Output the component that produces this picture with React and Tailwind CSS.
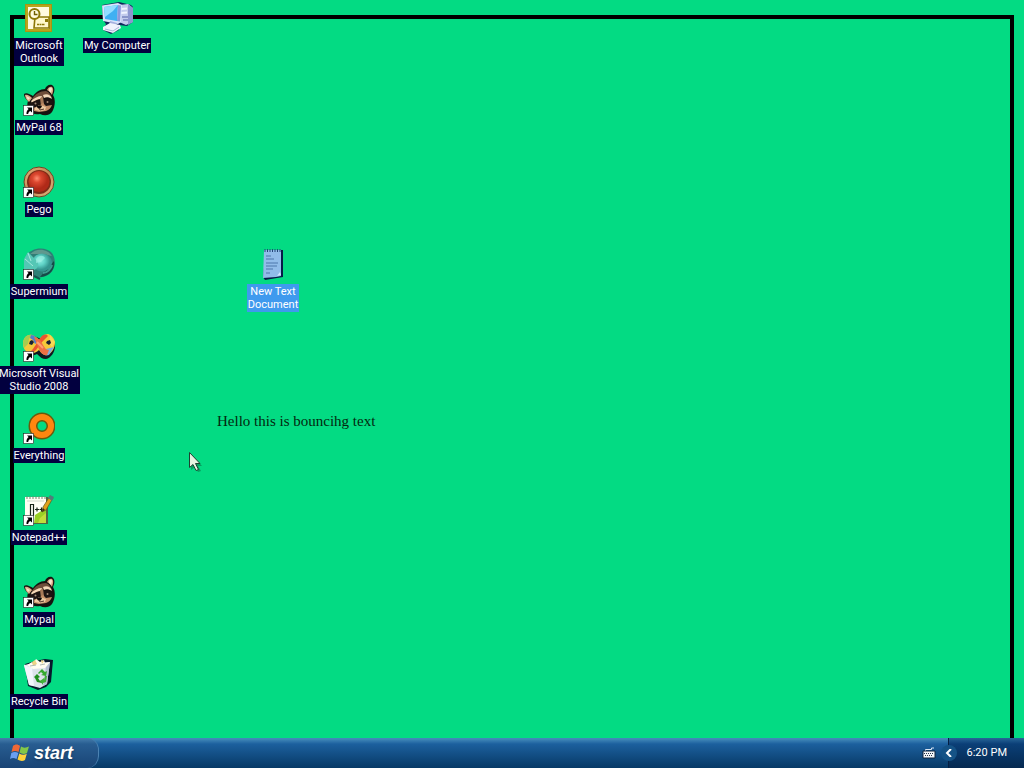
import React, { useState } from "react";

const ShortcutArrow = () => (
  <g>
    <rect x="0.5" y="21.5" width="10" height="10" fill="#fff" stroke="#222" strokeWidth="0.6" />
    <path d="M4 23.500h5v5l-1.700-1.600C6 27.500 5.200 28.800 5.200 30H3.500C3.300 28 4 26.400 5.600 25.100z" fill="#000" />
  </g>
);

const OutlookIcon = () => (
  <svg viewBox="0 0 32 32" className="size-8">
    <rect x="2" y="2" width="27" height="28" fill="#a89410" />
    <rect x="3" y="3" width="25" height="26" fill="#b9a41c" />
    <rect x="5" y="5" width="21" height="22" fill="#fffbe0" />
    <path d="M12 15h14v11H11z" fill="#fff8cc" stroke="#8c7808" strokeWidth="1.600" />
    <path d="M22 17h3v3h-3z" fill="#8c7808" />
    <path d="M14 22.500h8" stroke="#8c7808" strokeWidth="1.500" strokeDasharray="2 0.500" />
    <circle cx="11.500" cy="12" r="5" fill="#fffbe0" stroke="#8c7808" strokeWidth="2" />
    <path d="M11.500 9v3.500h3" fill="none" stroke="#6f5e00" strokeWidth="1.400" />
  </svg>
);

const ComputerIcon = () => (
  <svg viewBox="0 0 32 32" className="size-8">
    <path d="M2 28l3-6-3-4L1 3l17-3 12 3 3 3-1 14-6 4-8-1v5l-8 4z" fill="#11265c" />
    <path d="M18 3l9-1 5 4v14l-7 3-7-3z" fill="#c3cbec" />
    <path d="M27 2l5 4v14l-5 3z" fill="#8c97cf" />
    <path d="M20 6l6-.5v2L20 8zM20 10l6-.5v2l-6 .5z" fill="#f0f4ff" />
    <path d="M22 18h5M21 15h6" stroke="#5362a8" />
    <path d="M1 3.500L17 1l4 2-1 17-3 2-15-3z" fill="#dbe3fb" />
    <path d="M3 5l14-2-1 16-12-2z" fill="#3fb0f2" />
    <path d="M3 5l14-2-5 6-8 6z" fill="#92deff" />
    <path d="M17 3l3 .5-1 16-3-.5z" fill="#8c9adb" />
    <path d="M9 19l7 2-1 4-7-1z" fill="#a5b0de" />
    <path d="M2 25l7-4 10 2 1 3-8 5-10-3z" fill="#f0f2fc" />
    <path d="M4 27l8 2 6-4" fill="none" stroke="#a9b2da" />
  </svg>
);

const RaccoonIcon = () => (
  <svg viewBox="0 0 32 32" className="size-8">
    <path d="M1 10c2-2 6 0 9 2 3-4 7-7 12-7 1-3 4-5 7-4 3 2 3 6 1 10 3 5 2 12-1 17-3 4-8 4-12 2-4 1-9 0-11-4-2-3-2-6-1-9-3-2-4-5-4-7z" fill="#17120f" />
    <path d="M2 11c2-1 5 1 7 3l-3 4c-2-2-4-4-4-7z" fill="#e0ae88" />
    <path d="M3 12l4 2-2 2z" fill="#fbe5d0" />
    <path d="M24 6c1-3 4-4 5-3 2 2 1 5 0 8l-2-3z" fill="#d9a882" />
    <path d="M26 5c1-2 3-1 3 0l-1 4-2-2z" fill="#fae4cf" />
    <path d="M9 15c3-5 8-8 14-8 3 1 5 4 6 7-4-2-7-2-10 0l-5 2-5 3z" fill="#6f4e3a" />
    <path d="M8 17c3-3 7-5 11-5l-1 3c-4 0-7 2-9 4zM20 11c4-2 8 0 9 4-3-2-6-2-8-1z" fill="#f3d8b8" />
    <path d="M7 20c3-3 7-4 11-4 4-2 9-2 12 2l-2 5-7-1-4 3-7-1z" fill="#1d1412" />
    <path d="M17 14l3-1 1 7-3 2z" fill="#a77a58" />
    <path d="M10 24l6-2 4-3 3 3 6-1c-1 3-3 5-6 6l-7 1-5-1z" fill="#c28f67" />
    <path d="M12 24l4-3 4 1 3 1-1 3-4 1-6-1z" fill="#eccaa1" />
    <path d="M14 22c2-1 4-1 5 0l-1 2c-1 1-3 1-4-1z" fill="#0d0908" />
    <path d="M16 24l1 2 4-1" fill="none" stroke="#50352a" />
    <circle cx="12.500" cy="19.500" r="1" fill="#a38c79" />
    <circle cx="24.500" cy="18" r="1" fill="#a38c79" />
    <ShortcutArrow />
  </svg>
);

const PegoIcon = () => (
  <svg viewBox="0 0 32 32" className="size-8">
    <defs>
      <radialGradient id="pegoRed" cx=".4" cy=".35">
        <stop stopColor="#ff8d70" />
        <stop offset=".4" stopColor="#dc4830" />
        <stop offset="1" stopColor="#b02a18" />
      </radialGradient>
      <linearGradient id="pegoRim" x1="0" y1="0" x2="1" y2="1">
        <stop stopColor="#e6b27a" />
        <stop offset=".5" stopColor="#c08a56" />
        <stop offset="1" stopColor="#e2b981" />
      </linearGradient>
    </defs>
    <circle cx="16" cy="16" r="15" fill="url(#pegoRim)" stroke="#704524" />
    <circle cx="16" cy="16" r="12" fill="#7e2c18" />
    <circle cx="16" cy="15.500" r="10.500" fill="url(#pegoRed)" />
    <ShortcutArrow />
  </svg>
);

const SupermiumIcon = () => (
  <svg viewBox="0 0 32 32" className="size-8">
    <defs>
      <radialGradient id="smGlobe" cx=".4" cy=".4">
        <stop stopColor="#8eeee2" />
        <stop offset=".5" stopColor="#5fd2c6" />
        <stop offset="1" stopColor="#34958f" />
      </radialGradient>
    </defs>
    <path d="M3 8C8-1 23-2 29 5c5 7 3 18-4 22-7 4-16 3-20-2z" fill="#2e7f76" />
    <path d="M7 6c7-7 18-5 22 2l-9-2z" fill="#60988e" />
    <path d="M31 13c2 9-6 16-14 16l6-7z" fill="#164c48" />
    <path d="M20 25c4 0 8-4 9-8" fill="none" stroke="#3f9b90" strokeWidth="2" />
    <ellipse cx="19" cy="14.500" rx="10" ry="9" fill="url(#smGlobe)" />
    <path d="M1 11l4-7 5 5 3 3c3 3 3 6 0 9l-4 2-4-2-4 1z" fill="#55c7b5" />
    <path d="M5 5l3 8M2 11l8 7" stroke="#a2e9db" />
    <path d="M13 11c3-4 7-4 9-1l-4 4-5 1z" fill="#a5f2e6" opacity=".6" />
    <path d="M11 28l6 3" stroke="#14544f" strokeWidth="2" />
    <ShortcutArrow />
  </svg>
);

const VisualStudioIcon = () => (
  <svg viewBox="0 0 32 32" className="size-8">
    <path d="M2 14c0-6 4-9 9-8l7 3 7-3c4 1 7 5 7 10 0 6-4 12-9 13-4 0-6-2-9-5-3 2-9 2-11-1z" fill="#101820" />
    <path d="M0 14c0-6 4-10 9-9 4 1 5 3 7 5 2-3 5-6 9-6 4 1 7 5 7 9s-3 11-8 12c-4 0-6-2-8-5-3 3-7 4-11 3-3-2-5-5-5-9z" fill="#f4c83b" />
    <path d="M0 14c0-6 4-10 9-9l-3 4-1 5-4 4z" fill="#a7cc4f" />
    <path d="M8 5c4 0 5 3 8 6l-4 3-2-4-3-2z" fill="#537fcc" />
    <path d="M27 5l5 7-3 5-3-4z" fill="#f8d956" />
    <path d="M31 17l-5 8c-3 1-5 0-7-2l4-4z" fill="#7eaadc" />
    <path d="M5 22c3 0 5-3 7-6l6-9c3-3 5-3 7-1l-6 6-6 8c-3 3-5 4-8 2z" fill="#ec5430" />
    <path d="M11 7c4 0 7 4 9 8 2 3 3 5 6 5l-2 5c-5 1-7-4-9-8z" fill="#ee7045" />
    <path d="M14 12l6 6" stroke="#ff9f70" strokeWidth="2" />
    <path d="M7 11l2-1 2 2-2 3-3-1zM24 11l3-1 1 3-2 2-3-2z" fill="#182033" />
    <ShortcutArrow />
  </svg>
);

const EverythingIcon = () => (
  <svg viewBox="0 0 32 32" className="size-8">
    <path d="M11 22l-7 8" stroke="#6e5c0c" strokeWidth="4" />
    <circle cx="19" cy="14" r="9" fill="none" stroke="#6b5a0c" strokeWidth="9" />
    <circle cx="19" cy="14" r="9" fill="none" stroke="#ff8610" strokeWidth="6" />
    <ShortcutArrow />
  </svg>
);

const NotepadPlusIcon = () => (
  <svg viewBox="0 0 32 32" className="size-8">
    <path d="M3 3h22v27H3z" fill="#4f6643" />
    <path d="M2 3h21v26H2z" fill="#fffff4" />
    <path d="M12 21l11-7v15H11z" fill="#99cf25" />
    <path d="M17 24l6-5v10h-8z" fill="#c2dd3c" />
    <path d="M4 2v3M7 2v3M10 2v3M13 2v3M16 2v3M19 2v3M22 2v3" stroke="#7b836e" />
    <path d="M4 7h17" stroke="#d2d9cb" />
    <path d="M7.500 22V10.500h3V22M12 15.500h4M14 13.500v4M16.500 15.500h4M18.500 13.500v4" fill="none" stroke="#172315" strokeWidth="1.200" />
    <path d="M19 18l1-5L27 2l3 2-7 12z" fill="#e0a21c" stroke="#5b5720" strokeWidth=".7" />
    <path d="M25 4l2-3 4 2-2 4z" fill="#517d7b" />
    <path d="M19 18l1-4 2 2z" fill="#392918" />
    <ShortcutArrow />
  </svg>
);

const RecycleBinIcon = () => (
  <svg viewBox="0 0 32 32" className="size-8">
    <path d="M2 6l10-3 10-2 8 1-2 22-5 5-8 3-10-4z" fill="#07182c" />
    <path d="M1 7l11-2 15-1-3 22-7 4-11-3z" fill="#dce2ea" />
    <path d="M1 7l8 3 2 18-5-1z" fill="#f3f5fc" />
    <path d="M23 9l4-5-3 22-4 2z" fill="#b5bfd4" />
    <path d="M4 7l5-3 1 2 3-5 4 3 4-2 1 3 5-1-5 6-12 1z" fill="#fffdf1" />
    <path d="M9 4l3-2 2 4-4 2zM18 2l3 1-2 3z" fill="#eed484" />
    <path d="M7 8l6-1M17 7l5-1" stroke="#b2b9b2" />
    <path d="M15 15l4-4 3 3 2-1-1 5-5-1 2-1-2-2-2 2z" fill="#35a92e" />
    <path d="M14 16l3 3-2 1 2 3 2-1v3l-5-1-2-4-1-1z" fill="#208e1d" />
    <path d="M24 18l-1 6-3 1v2l-3-4 4-3v2l1-4z" fill="#42b13a" />
  </svg>
);

const TextFileIcon = () => (
  <svg viewBox="0 0 32 32" className="size-8">
    <path d="M9 2h17v27L8 32l-2-3z" fill="#061b47" />
    <path d="M7 2h17v26l-5 1-13 1z" fill="#91bce9" />
    <path d="M8 1v3M10.500 1v3M13 1v3M15.500 1v3M18 1v3M20.500 1v3M23 1v3" stroke="#234477" />
    <path d="M9 8h5M9 11h8M9 15h12M9 18h11M9 21h7M9 25h4" stroke="#4c77ab" />
    <path d="M20 28l4-1-1-3z" fill="#d3e6ff" />
  </svg>
);

const WindowsLogo = () => (
  <svg viewBox="0 0 20 20" className="size-5">
    <path d="M3 3c2-2 5-2 7 0L8.500 9C6 7.500 4 7.500 1.500 9z" fill="#ef6835" />
    <path d="M11 3.500c2 1.500 5 1.500 8 0L17 10c-3 1.500-5 1-7.500-.5z" fill="#83c748" />
    <path d="M1.300 10c2.500-1.500 4.500-1.500 7 0L6.500 16C4 14.500 2 14.500 0 16z" fill="#6b9ff0" />
    <path d="M9.300 10.500c2.500 1.500 5 1.500 7.500.3L15 17c-2.500 1.500-5 1-7.500-.5z" fill="#ffd23b" />
  </svg>
);

const KeyboardIcon = () => (
  <svg viewBox="0 0 14 12" className="w-3.5 h-3">
    <path d="M3.500 4V2.500h6V1H12" fill="none" stroke="#d9e5f3" />
    <path d="M1 4h12v7H1z" fill="#f4f6f8" stroke="#10243d" />
    <path d="M2 6.500h10M3 8.500h8" stroke="#28364a" strokeDasharray="1 1" />
  </svg>
);

const icons = [
  { name: "Microsoft\nOutlook", Icon: OutlookIcon },
  { name: "MyPal 68", Icon: RaccoonIcon },
  { name: "Pego", Icon: PegoIcon },
  { name: "Supermium", Icon: SupermiumIcon },
  { name: "Microsoft Visual\nStudio 2008", Icon: VisualStudioIcon },
  { name: "Everything", Icon: EverythingIcon },
  { name: "Notepad++", Icon: NotepadPlusIcon },
  { name: "Mypal", Icon: RaccoonIcon },
  { name: "Recycle Bin", Icon: RecycleBinIcon },
  { name: "My Computer", Icon: ComputerIcon },
];

const textFile = { name: "New Text\nDocument", Icon: TextFileIcon };

const DesktopIcon = ({ name, Icon, selected, onSelect }) => (
  <button onClick={() => onSelect(name)} className="flex w-[78px] flex-col items-center gap-1 pt-0.5 focus:outline-none">
    <Icon />
    <span className={`px-px pt-px pb-px text-center text-[11px] leading-[13px] whitespace-pre text-white ${selected ? "bg-[#3f9aee]" : "bg-[#02003f]"}`}>
      {name}
    </span>
  </button>
);

const App = () => {
  const [selected, setSelected] = useState(textFile.name);

  return (
    <div className="flex h-screen flex-col overflow-hidden bg-[#03db83] font-[Roboto,sans-serif]">
      <main className="relative flex min-h-0 flex-1 px-2.5 pt-[15px]">
        <div className="flex-1 border-4 border-b-0 border-black" />

        <div className="absolute top-0 left-0 grid grid-flow-col grid-rows-[repeat(9,82px)] auto-cols-[78px] items-start">
          {icons.map((item) => (
            <DesktopIcon key={item.name} {...item} selected={selected === item.name} onSelect={setSelected} />
          ))}
        </div>

        <div className="absolute top-[246px] left-[234px]">
          <DesktopIcon {...textFile} selected={selected === textFile.name} onSelect={setSelected} />
        </div>

        <p className="absolute top-[412px] left-[217px] font-['Liberation_Serif',serif] text-[15px] leading-[18px] whitespace-nowrap text-[#04280f]">
          Hello this is bouncihg text
        </p>

        <svg viewBox="0 0 14 22" className="absolute top-[451px] left-[188px] h-[22px] w-3.5">
          <path d="M3 3v16l4-3 3 5 3-1-3-5h4z" fill="#087448" opacity=".6" />
          <path d="M1.500 1.500v15l3.500-3 3 6 2.500-1-3-6h4.500z" fill="#e4f3e0" stroke="#1d4230" />
        </svg>
      </main>

      <footer className="flex h-[30px] shrink-0 items-stretch justify-between bg-linear-to-b from-[#4289b9] from-3% via-[#1c609e] via-20% to-[#073966]">
        <button className="flex w-[99px] items-center gap-1 rounded-r-xl border-r border-[#4b83b3] bg-linear-to-b from-[#477fad] via-[#285d91] via-20% to-[#194475] pl-2.5 font-['Liberation_Sans',sans-serif] text-lg font-bold text-white italic text-shadow-md">
          <WindowsLogo />
          start
        </button>

        <div className="flex items-stretch">
          <div className="flex w-[26px] items-center">
            <KeyboardIcon />
          </div>
          <div className="flex items-center border-l border-[#041f42] bg-linear-to-b from-[#286698] via-[#0b3f77] via-20% to-[#052950] pr-[17px] text-[11px] text-white">
            <button aria-label="Show hidden icons" className="-ml-2 flex size-4 items-center justify-center rounded-full bg-[#155386]">
              <svg viewBox="0 0 8 8" className="size-2">
                <path d="M6 0L2 4l4 4" fill="none" stroke="#fff" strokeWidth="2" />
              </svg>
            </button>
            <time className="ml-2.5">6:20 PM</time>
          </div>
        </div>
      </footer>
    </div>
  );
};

export default App;
